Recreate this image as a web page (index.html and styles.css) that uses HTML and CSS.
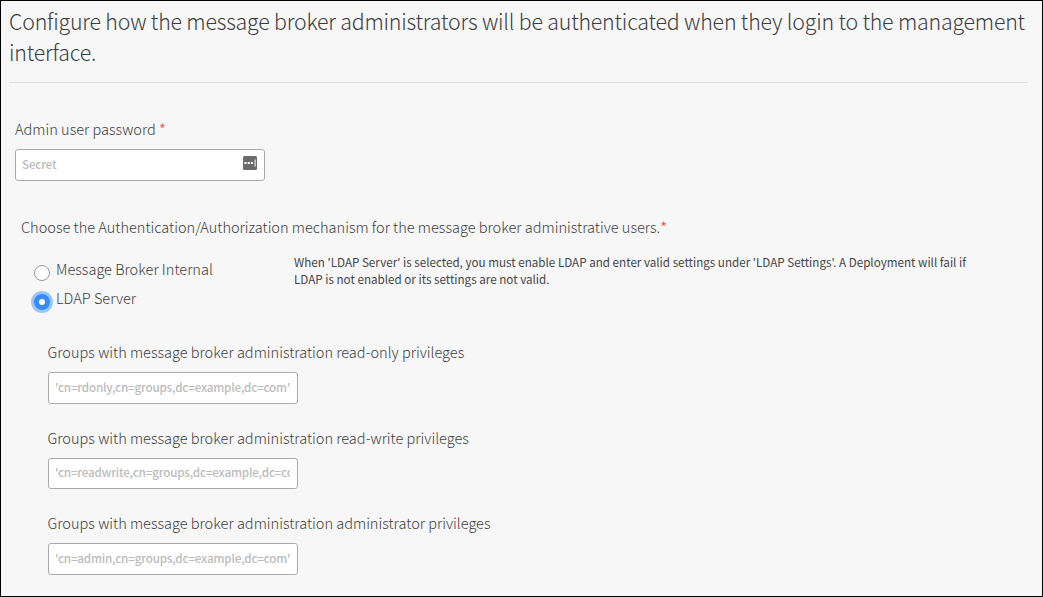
FILE: index.html
```html
<!DOCTYPE html>
<html lang="en">
<head>
<meta charset="utf-8">
<title>Authentication</title>
<link rel="stylesheet" href="styles.css">
</head>
<body>
<main class="panel">
  <h1 class="title"><span class="line">Configure how the message broker administrators will be authenticated when they login to the management</span> <span class="line">interface.</span></h1>
  <section class="field password">
    <label class="label" for="pw">Admin user password <span class="req">*</span></label>
    <div class="box"><input class="input" id="pw" placeholder="Secret">
      <svg class="key" width="14" height="14" viewBox="0 0 14 14"><rect width="14" height="14" rx="1.5" fill="#6b6b6b"/><path d="M1.5 6h2v2h-2zM4.7 6h2v2h-2zM7.9 6h2v2h-2z" fill="#fff"/><path d="M11.5 3.5h1.3v7h-1.3z" fill="#ddd"/></svg>
    </div>
  </section>
  <section class="mechanism">
    <p class="label">Choose the Authentication/Authorization mechanism for the message broker administrative users.<span class="req">*</span></p>
    <div class="row">
      <div class="options">
        <label class="option"><span class="radio"></span><span>Message Broker Internal</span></label>
        <label class="option"><span class="radio on"></span><span>LDAP Server</span></label>
      </div>
      <p class="note"><span class="line">When 'LDAP Server' is selected, you must enable LDAP and enter valid settings under 'LDAP Settings'. A Deployment will fail if</span> <span class="line">LDAP is not enabled or its settings are not valid.</span></p>
    </div>
    <div class="groups">
      <div class="field"><label class="label" for="g1">Groups with message broker administration read-only privileges</label><input class="input" id="g1" placeholder="'cn=rdonly,cn=groups,dc=example,dc=com'"></div>
      <div class="field short"><label class="label" for="g2">Groups with message broker administration read-write privileges</label><input class="input" id="g2" placeholder="'cn=readwrite,cn=groups,dc=example,dc=com'"></div>
      <div class="field"><label class="label" for="g3">Groups with message broker administration administrator privileges</label><input class="input" id="g3" placeholder="'cn=admin,cn=groups,dc=example,dc=com'"></div>
    </div>
  </section>
</main>
</body>
</html>
```
FILE: styles.css
```css
* { box-sizing: border-box; }
body { margin: 0; font-family: "Noto Sans CJK SC", "Open Sans", sans-serif; color: #3c3c3c; }
.panel { height: 597px; overflow: hidden; border: 1px solid #000; background: #f7f7f7; padding: 4px 14px 0 8px; }
.title { margin: 0; height: 78px; border-bottom: 1px solid #ddd; font-size: 21.35px; letter-spacing: -0.2px; font-weight: 300; line-height: 31px; }
.line { display: block; white-space: nowrap; width: max-content; }
.label { display: block; margin: 0; height: 24px; font-size: 14.55px; font-weight: 300; line-height: 22px; white-space: nowrap; }
.req { color: #f55; font-weight: 400; }
.password { margin: 35px 0 0 6px; }
.field .label { margin-bottom: 7px; }
.box { position: relative; width: 250px; }
.input { display: block; width: 250px; height: 32px; padding: 0 7px 3px 6px; border: 1px solid #aaa; border-radius: 3px; background: #fff; font-family: inherit; font-size: 11.7px; font-weight: 500; letter-spacing: -0.2px; }
.input::placeholder { color: #bcbcbc; opacity: 1; }
.key { position: absolute; left: 228px; top: 7px; }
.mechanism { margin: 35px 0 0 12px; }
.row { display: flex; height: 101px; padding-top: 18px; }
.options { width: 273px; padding-left: 13px; }
.option { display: flex; height: 29px; gap: 6px; font-size: 14.55px; font-weight: 300; line-height: 22px; white-space: nowrap; }
.radio { flex: none; width: 16px; height: 16px; margin-top: 7px; border: 1px solid #999; border-radius: 50%; background: #fff; }
.radio.on { border: 5px solid #368cf8; box-shadow: 0 0 0 3px #9cc6fa; }
.note { margin: -5px 0 0; font-size: 11.65px; line-height: 17px; color: #454545; }
.groups { display: flex; flex-direction: column; gap: 23px; padding-left: 27px; }
.groups .label { margin-left: -0.5px; }
.short .input { height: 31px; padding-bottom: 4px; }
```
